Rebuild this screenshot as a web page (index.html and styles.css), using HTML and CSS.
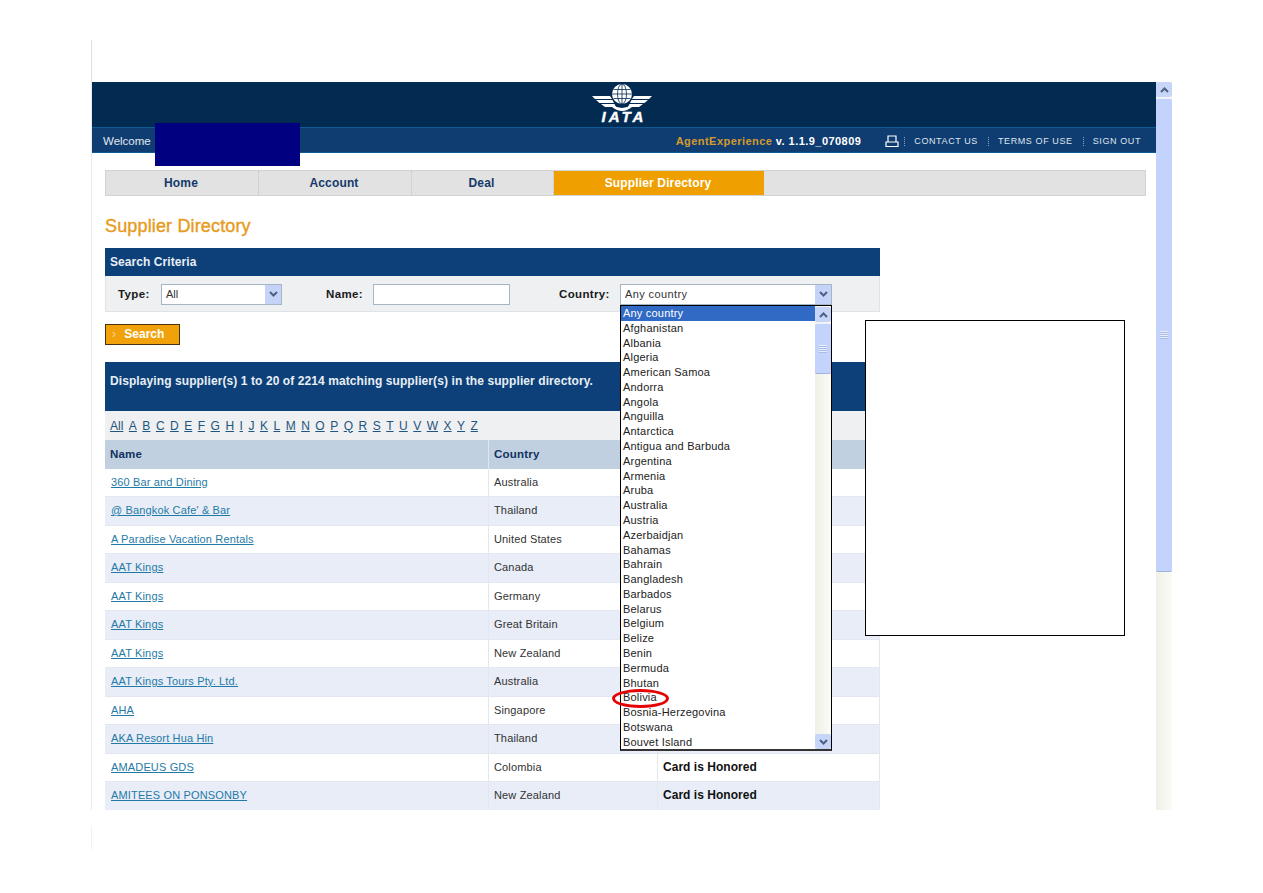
FILE: index.html
```html
<!DOCTYPE html>
<html lang="en">
<head>
<meta charset="UTF-8">
<title>Supplier Directory</title>
<link rel="stylesheet" href="styles.css">
</head>
<body>
<div class="margin-line"></div>
<div class="margin-line lower"></div>
<div class="window">
    <div class="page">
        <div class="logo-bar">
            <div class="logo">
                <svg width="64" height="42" viewBox="0 0 64 42">
                    <circle cx="31" cy="10" r="10" fill="#fff"/>
                    <g fill="none" stroke="#032a50" stroke-width="0.8">
                        <ellipse cx="31" cy="10" rx="4.500" ry="10"/>
                        <path d="M31 0V20M22.500 5.500H39.500M21 10H41M22.500 14.500H39.500"/>
                    </g>
                    <path d="M1 12H19L21 15H4ZM5 16H21.500L23 19H8.500ZM10 20H23.500L25 23H14ZM61 12H43L41 15H58ZM57 16H40.500L39 19H53.500ZM52 20H38.500L37 23H48Z" fill="#fff"/>
                    <path d="M22 21Q26 24 31 24Q36 24 40 21L41 23Q36 27 31 27Q26 27 21 23Z" fill="#fff"/>
                </svg>
                <span class="logo-text">IATA</span>
            </div>
        </div>
        <div class="user-bar">
            <span class="welcome">Welcome</span>
            <span class="version"><b class="app-name">AgentExperience</b> v. 1.1.9_070809</span>
            <svg class="printer" width="14" height="13" viewBox="0 0 14 13">
                <path d="M3 7V1H11V7M1 7H13V11.500H1Z" fill="none" stroke="#fff" stroke-width="1.200"/>
            </svg>
            <span class="sep"></span>
            <a class="top-link">CONTACT US</a>
            <span class="sep"></span>
            <a class="top-link">TERMS OF USE</a>
            <span class="sep"></span>
            <a class="top-link">SIGN OUT</a>
        </div>

        <div class="content">
            <div class="nav">
                <a class="nav-item home">Home</a>
                <a class="nav-item account">Account</a>
                <a class="nav-item deal">Deal</a>
                <a class="nav-item supplier active">Supplier Directory</a>
            </div>

            <h1>Supplier Directory</h1>

            <div class="search-panel">
                <div class="panel-head">Search Criteria</div>
                <div class="search-row">
                    <label class="type-label">Type:</label>
                    <div class="select type-select"><span>All</span><i class="arrow-btn"><svg width="9" height="6" viewBox="0 0 9 6"><path d="M1 1L4.500 4.500L8 1" fill="none" stroke="#4d6185" stroke-width="2"/></svg></i></div>
                    <label class="name-label">Name:</label>
                    <div class="text-input"></div>
                    <label class="country-label">Country:</label>
                    <div class="select country-select"><span>Any country</span><i class="arrow-btn"><svg width="9" height="6" viewBox="0 0 9 6"><path d="M1 1L4.500 4.500L8 1" fill="none" stroke="#4d6185" stroke-width="2"/></svg></i></div>
                </div>
            </div>

            <a class="search-btn"><span class="chevron">›</span> Search</a>

            <div class="results-head">Displaying supplier(s) 1 to 20 of 2214 matching supplier(s) in the supplier directory.</div>
            <div class="letters">
                <a>All</a><a>A</a><a>B</a><a>C</a><a>D</a><a>E</a><a>F</a><a>G</a><a>H</a><a>I</a><a>J</a><a>K</a><a>L</a><a>M</a><a>N</a><a>O</a><a>P</a><a>Q</a><a>R</a><a>S</a><a>T</a><a>U</a><a>V</a><a>W</a><a>X</a><a>Y</a><a>Z</a>
            </div>
            <div class="row row-head"><div>Name</div><div>Country</div><div></div></div>
            <div class="row"><div><a>360 Bar and Dining</a></div><div>Australia</div><div></div></div>
            <div class="row alt"><div><a>@ Bangkok Cafe' &amp; Bar</a></div><div>Thailand</div><div></div></div>
            <div class="row"><div><a>A Paradise Vacation Rentals</a></div><div>United States</div><div></div></div>
            <div class="row alt"><div><a>AAT Kings</a></div><div>Canada</div><div></div></div>
            <div class="row"><div><a>AAT Kings</a></div><div>Germany</div><div></div></div>
            <div class="row alt"><div><a>AAT Kings</a></div><div>Great Britain</div><div></div></div>
            <div class="row"><div><a>AAT Kings</a></div><div>New Zealand</div><div></div></div>
            <div class="row alt"><div><a>AAT Kings Tours Pty. Ltd.</a></div><div>Australia</div><div></div></div>
            <div class="row"><div><a>AHA</a></div><div>Singapore</div><div></div></div>
            <div class="row alt"><div><a>AKA Resort Hua Hin</a></div><div>Thailand</div><div></div></div>
            <div class="row"><div><a>AMADEUS GDS</a></div><div>Colombia</div><div class="honored">Card is Honored</div></div>
            <div class="row alt"><div><a>AMITEES ON PONSONBY</a></div><div>New Zealand</div><div class="honored">Card is Honored</div></div>
        </div>
    </div>
    <div class="scrollbar">
        <div class="scroll-btn"><svg width="9" height="6" viewBox="0 0 9 6"><path d="M1 5L4.500 1.500L8 5" fill="none" stroke="#4d6185" stroke-width="2"/></svg></div>
        <div class="scroll-thumb page-thumb"><i class="grip"></i></div>
    </div>
</div>

<!-- things lying over the page -->
<div class="redaction"></div>
<div class="note-box"></div>

<div class="dropdown">
    <ul class="options">
        <li class="selected">Any country</li>
        <li>Afghanistan</li>
        <li>Albania</li>
        <li>Algeria</li>
        <li>American Samoa</li>
        <li>Andorra</li>
        <li>Angola</li>
        <li>Anguilla</li>
        <li>Antarctica</li>
        <li>Antigua and Barbuda</li>
        <li>Argentina</li>
        <li>Armenia</li>
        <li>Aruba</li>
        <li>Australia</li>
        <li>Austria</li>
        <li>Azerbaidjan</li>
        <li>Bahamas</li>
        <li>Bahrain</li>
        <li>Bangladesh</li>
        <li>Barbados</li>
        <li>Belarus</li>
        <li>Belgium</li>
        <li>Belize</li>
        <li>Benin</li>
        <li>Bermuda</li>
        <li>Bhutan</li>
        <li>Bolivia</li>
        <li>Bosnia-Herzegovina</li>
        <li>Botswana</li>
        <li>Bouvet Island</li>
    </ul>
    <div class="scrollbar small">
        <div class="scroll-btn"><svg width="9" height="6" viewBox="0 0 9 6"><path d="M1 5L4.500 1.500L8 5" fill="none" stroke="#4d6185" stroke-width="2"/></svg></div>
        <div class="scroll-thumb list-thumb"><i class="grip"></i></div>
        <div class="scroll-btn bottom"><svg width="9" height="6" viewBox="0 0 9 6"><path d="M1 1L4.500 4.500L8 1" fill="none" stroke="#4d6185" stroke-width="2"/></svg></div>
    </div>
</div>
<div class="circle"></div>
</body>
</html>
```

FILE: styles.css
```css
html, body {
    margin: 0;
    padding: 0;
    background: #fff;
    height: 893px;
    overflow: hidden;
}
body {
    position: relative;
    font-family: "Liberation Sans", Arial, sans-serif;
    font-size: 11px;
    color: #222;
}
a {
    color: inherit;
}
.margin-line {
    position: absolute;
    left: 91px;
    top: 40px;
    width: 1px;
    height: 42px;
    background: #dde0e4;
}
.margin-line.lower {
    top: 826px;
    height: 24px;
    background: #f1f2f4;
}
.window {
    display: flex;
    width: 1081px;
    height: 728px;
    margin-left: 91px;
    padding-top: 82px;
}
.page {
    width: 1065px;
    height: 728px;
    overflow: hidden;
    border-left: 1px solid #e8eaee;
    box-sizing: border-box;
}
.logo-bar {
    height: 45px;
    background: #032a50;
    padding-left: 499px;
}
.logo {
    position: relative;
    width: 64px;
    height: 42px;
    padding-top: 2px;
}
.logo-text {
    position: absolute;
    left: 9px;
    top: 28px;
    width: 48px;
    text-align: center;
    color: #fff;
    font-size: 15px;
    line-height: 14px;
    font-weight: bold;
    font-style: italic;
    letter-spacing: 3px;
    -webkit-text-stroke: 0.4px #fff;
}
.user-bar {
    height: 26px;
    box-sizing: border-box;
    background: #0f3d72;
    border-top: 1px solid #0d5a94;
    border-bottom: 1px solid #0d5a94;
    display: flex;
    align-items: center;
    padding: 2px 15px 0 11px;
    color: #fff;
}
.welcome {
    flex: 1;
    color: #e2e8ef;
    font-size: 11.500px;
}
.version {
    font-weight: bold;
    font-size: 11px;
    letter-spacing: 0.45px;
    color: #fff;
    margin-right: 24px;
}
.app-name {
    color: #d59a2c;
}
.sep {
    width: 0;
    height: 9px;
    border-left: 1px dotted #8ea5c0;
    margin: 0 9px 0 5px;
}
.top-link {
    font-size: 9px;
    letter-spacing: 0.6px;
    color: #dfe6ee;
}
.top-link + .sep {
    margin: 0 9px 0 10px;
}

.content {
    padding: 17px 10px 0 13px;
}
.nav {
    display: flex;
    height: 26px;
    width: 1041px;
    box-sizing: border-box;
    background: #e1e2e1;
    border: 1px solid #d2d3d3;
    font-size: 12px;
    font-weight: bold;
    color: #15396b;
    letter-spacing: 0.15px;
}
.nav-item {
    display: flex;
    align-items: center;
    justify-content: center;
    border-right: 1px dotted #c4c6c6;
    box-sizing: border-box;
    padding-right: 2px;
}
.home { width: 153px; }
.account { width: 153px; }
.deal { width: 142px; }
.supplier { width: 210px; }
.active {
    background: #ef9f00;
    color: #fff;
    border-right: 0;
}
h1 {
    margin: 19px 0 11px;
    font-size: 18px;
    line-height: 22px;
    font-weight: normal;
    letter-spacing: 0.15px;
    -webkit-text-stroke: 0.4px #e69c1e;
    color: #e69c1e;
}
.search-panel {
    width: 775px;
}
.panel-head {
    height: 28px;
    box-sizing: border-box;
    padding-left: 5px;
    background: #0d4079;
    color: #e8eef5;
    font-size: 12px;
    font-weight: bold;
    line-height: 28px;
    letter-spacing: 0.07px;
}
.search-row {
    display: flex;
    align-items: center;
    height: 36px;
    box-sizing: border-box;
    background: #eef0f1;
    border: 1px solid #dfe3e6;
    border-top: 0;
    font-weight: bold;
    letter-spacing: 0.35px;
    color: #1a1a1a;
    font-size: 11.500px;
}
.type-label { margin-left: 12px; width: 43px; }
.name-label { margin-left: 44px; width: 47px; }
.country-label { margin-left: 49px; width: 61px; }
.select {
    display: flex;
    align-items: center;
    justify-content: space-between;
    height: 21px;
    box-sizing: border-box;
    background: #fff;
    border: 1px solid #a5b5c5;
    font-weight: normal;
    font-size: 11px;
    letter-spacing: 0;
    color: #333;
    padding-left: 4px;
    margin-top: 1px;
}
.type-select { width: 121px; }
.country-select {
    width: 212px;
    letter-spacing: 0.4px;
}
.arrow-btn {
    display: flex;
    align-items: center;
    justify-content: center;
    width: 16px;
    height: 19px;
    background: #c4d3f7;
}
.text-input {
    width: 137px;
    height: 21px;
    box-sizing: border-box;
    background: #fff;
    border: 1px solid #a5b5c5;
    margin-top: 1px;
}
.search-btn {
    display: block;
    width: 75px;
    height: 21px;
    box-sizing: border-box;
    margin: 12px 0 17px;
    padding-left: 6px;
    background: #f1a20b;
    border: 1px solid #4a3310;
    color: #fff;
    font-size: 12px;
    font-weight: bold;
    line-height: 19px;
}
.chevron {
    color: #f8d48c;
    margin-right: 5px;
    font-weight: normal;
}
.results-head {
    width: 775px;
    height: 49px;
    box-sizing: border-box;
    padding: 12px 0 0 5px;
    background: #0d4079;
    color: #e8eef5;
    font-size: 12px;
    font-weight: bold;
    line-height: 14px;
    letter-spacing: 0.09px;
}
.letters {
    display: flex;
    gap: 5.500px;
    width: 775px;
    height: 29px;
    box-sizing: border-box;
    padding-left: 5px;
    align-items: center;
    background: #eef0f1;
    color: #1f5580;
    font-size: 12px;
}
.letters a {
    text-decoration: underline;
}
.row {
    display: grid;
    grid-template-columns: 384px 169px 222px;
    width: 775px;
    height: 28.500px;
    line-height: 27.500px;
    background: #fff;
    color: #333;
    letter-spacing: 0.15px;
    box-sizing: border-box;
    border-bottom: 1px solid #e3e8f0;
}
.row > div {
    padding-left: 5px;
    border-right: 1px solid #e3e8f0;
    box-sizing: border-box;
}
.row > div:first-child {
    padding-left: 6px;
}
.row.alt {
    background: #e8edf8;
}
.row a {
    color: #1f7aa6;
    text-decoration: underline;
}
.row-head {
    background: #c0d0e1;
    color: #12335f;
    font-weight: bold;
    font-size: 11.500px;
    line-height: 28px;
    letter-spacing: 0.2px;
    border-bottom: 0;
}
.row.row-head > div:first-child {
    padding-left: 5px;
}
.row-head > div {
    border-right: 1px solid #dfe6ee;
}
.row .honored {
    font-size: 12px;
    font-weight: bold;
    color: #111;
    letter-spacing: 0.03px;
}

.scrollbar {
    position: relative;
    width: 16px;
    height: 728px;
    background: linear-gradient(to right, #f0f0e8, #fbfbf6);
    flex: none;
}
.scroll-btn {
    display: flex;
    align-items: center;
    justify-content: center;
    height: 15px;
    background: #c6d5f8;
    border-radius: 2px;
}
.scroll-btn.bottom {
    position: absolute;
    left: 0;
    right: 0;
    bottom: 0;
}
.scroll-thumb {
    display: flex;
    align-items: center;
    justify-content: center;
    box-sizing: border-box;
    background: #c3d3fb;
    border-top: 1px solid #eef2fd;
    border-bottom: 1px solid #9fb1dd;
    border-radius: 2px;
    margin-top: 1px;
}
.page-thumb {
    height: 474px;
}
.list-thumb {
    height: 51px;
}
.grip {
    display: block;
    width: 8px;
    height: 8px;
    background: repeating-linear-gradient(to bottom, #e8eefd 0 1px, #a9bce8 1px 2px);
}

.redaction {
    position: absolute;
    left: 155px;
    top: 123px;
    width: 145px;
    height: 43px;
    background: #000080;
}
.note-box {
    position: absolute;
    left: 865px;
    top: 320px;
    width: 260px;
    height: 316px;
    box-sizing: border-box;
    background: #fff;
    border: 1px solid #000;
}
.dropdown {
    position: absolute;
    left: 620px;
    top: 305px;
    width: 212px;
    height: 446px;
    box-sizing: border-box;
    display: flex;
    background: #fff;
    border: 1px solid #000;
    border-bottom: 2px solid #333;
}
.options {
    list-style: none;
    margin: 0;
    padding: 0;
    flex: 1;
    color: #222;
    letter-spacing: 0.2px;
}
.options li {
    height: 14.790px;
    line-height: 14.790px;
    padding-left: 2px;
    white-space: nowrap;
}
.options li.selected {
    background: #316ac5;
    color: #fff;
}
.dropdown .scrollbar {
    height: 100%;
    padding-top: 1px;
    box-sizing: border-box;
}
.circle {
    position: absolute;
    left: 612px;
    top: 689px;
    width: 57px;
    height: 19px;
    box-sizing: border-box;
    border: 3px solid #e60000;
    border-radius: 50%;
}
```
